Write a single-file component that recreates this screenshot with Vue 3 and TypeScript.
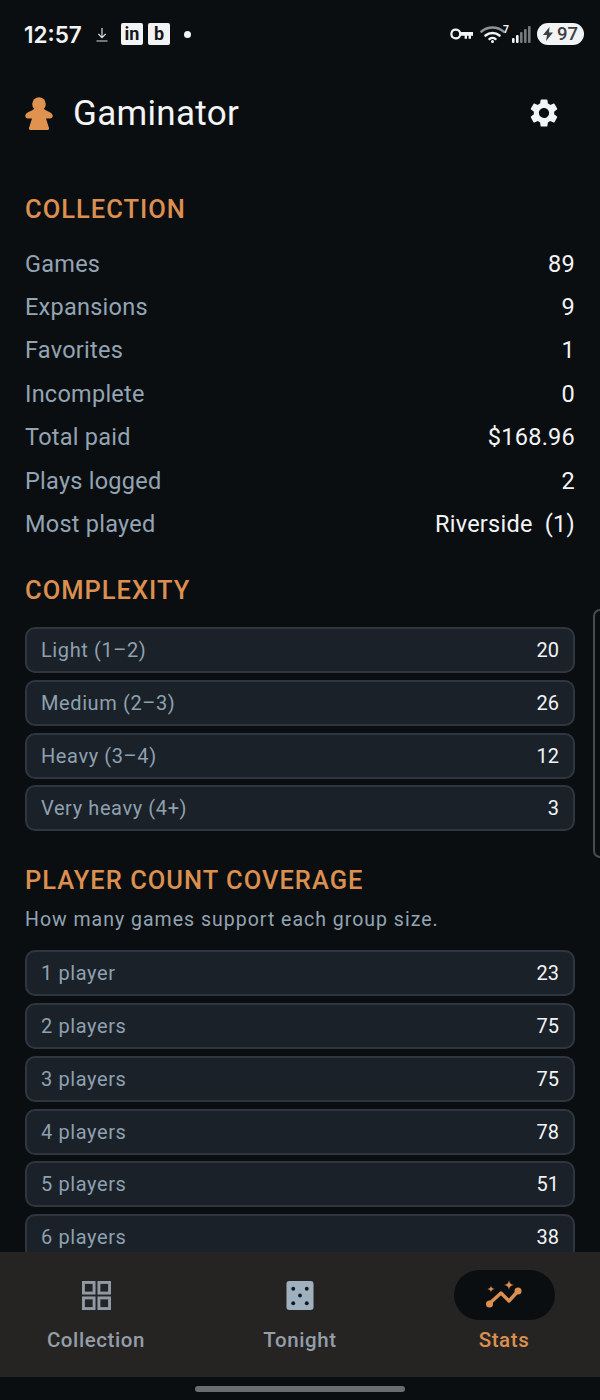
<template>
  <div class="screen">
    <div class="status">
      <div class="status-left">
        <span class="clock">12:57</span>
        <svg class="dl" viewBox="0 0 12 15" width="12" height="15" fill="none" stroke="#d9dbdd" stroke-width="1.2">
          <path d="M6 1v9.500M2.400 7l3.600 3.600L9.600 7M0.500 14h11" />
        </svg>
        <span class="app-badge">in</span>
        <span class="app-badge">b</span>
        <span class="dot"></span>
      </div>
      <div class="status-right">
        <svg viewBox="0 0 23 12" width="23" height="12" fill="#f2f3f4">
          <path fill-rule="evenodd" d="M5.800 0.500a5.500 5.500 0 0 1 5.200 3.500H23v3.800h-2v3h-2.400v-3H17v3h-2.400v-3H11a5.500 5.500 0 1 1-5.200-7.300zm0 2.200a3.300 3.300 0 1 0 0 6.600 3.300 3.300 0 0 0 0-6.600z" />
        </svg>
        <svg class="wifi" viewBox="0 -4 30 22" width="30" height="22" fill="none" stroke-linecap="round">
          <path d="M1.500 6.500a17 17 0 0 1 22 0" stroke="#8f9193" stroke-width="2.600" />
          <path d="M5.500 10.500a11 11 0 0 1 14 0" stroke="#f2f3f4" stroke-width="2.600" />
          <path d="M9.500 14a5 5 0 0 1 6 0" stroke="#f2f3f4" stroke-width="2.400" />
          <circle cx="12.500" cy="16.500" r="1.500" fill="#f2f3f4" />
          <text x="23" y="8" font-size="10.500" font-family="Roboto, sans-serif" font-weight="700" fill="#f2f3f4">7</text>
        </svg>
        <svg class="signal" viewBox="0 0 19 18" width="19" height="18">
          <rect x="0" y="13" width="2.600" height="5" rx="1" fill="#f2f3f4" />
          <rect x="4" y="10" width="2.600" height="8" rx="1" fill="#f2f3f4" />
          <rect x="8" y="7" width="2.600" height="11" rx="1" fill="#77797b" />
          <rect x="12" y="4" width="2.600" height="14" rx="1" fill="#77797b" />
          <rect x="16" y="1" width="2.600" height="17" rx="1" fill="#77797b" />
        </svg>
        <span class="battery">
          <svg viewBox="0 0 10 14" width="10" height="14"><path d="M6.500 0 0 8h4l-1 6 7-8.500H6z" fill="#3c3e40" /></svg>
          97
        </span>
      </div>
    </div>

    <main class="content">
      <header class="app-header">
        <div class="brand">
          <svg viewBox="0 0 28 33" width="28" height="33">
            <circle cx="14" cy="7" r="6.800" fill="#e0934f" />
            <path d="M9 12h10c1.500 1.500 7 3 8.300 5.500 1.200 2.300-.3 4-2.300 4h-4l3 9.500c.3 1.100-.4 2-1.500 2h-17c-1.100 0-1.800-.9-1.500-2l3-9.500H3c-2 0-3.500-1.700-2.300-4C2 15 7.500 13.500 9 12z" fill="#e0934f" />
          </svg>
          <h1>Gaminator</h1>
        </div>
        <svg class="gear" viewBox="0 0 24 24" width="34" height="34" fill="#f2f4f6">
          <path d="M19.140 12.940c.04-.3.060-.61.060-.94 0-.32-.02-.64-.07-.94l2.030-1.580a.49.49 0 0 0 .12-.61l-1.920-3.320a.488.488 0 0 0-.59-.22l-2.390.96c-.5-.38-1.030-.7-1.620-.94l-.36-2.540a.484.484 0 0 0-.48-.41h-3.840c-.24 0-.43.170-.47.410l-.36 2.540c-.59.240-1.130.57-1.620.94l-2.390-.96c-.22-.08-.47 0-.59.220L2.740 8.870c-.12.210-.08.470.120.610l2.030 1.580c-.05.300-.09.630-.09.940s.02.640.07.940l-2.030 1.580a.49.49 0 0 0-.12.610l1.920 3.320c.12.220.37.290.59.220l2.390-.96c.5.380 1.030.7 1.620.94l.36 2.540c.05.240.24.410.48.410h3.840c.24 0 .44-.17.470-.41l.36-2.540c.59-.24 1.130-.56 1.620-.94l2.390.96c.22.080.47 0 .59-.22l1.920-3.320c.12-.22.070-.47-.12-.61l-2.010-1.580zM12 15.600A3.610 3.610 0 0 1 8.400 12c0-1.980 1.620-3.600 3.600-3.600s3.600 1.620 3.600 3.600-1.620 3.600-3.600 3.600z" />
        </svg>
      </header>

      <section class="collection">
        <h2>COLLECTION</h2>
        <div class="stat-list">
          <div v-for="row in collection" :key="row.label" class="stat-row">
            <span class="stat-label">{{ row.label }}</span>
            <span class="stat-value">{{ row.value }}</span>
          </div>
        </div>
      </section>

      <section class="complexity">
        <h2>COMPLEXITY</h2>
        <div class="cards">
          <div v-for="row in complexity" :key="row.label" class="card">
            <span class="card-label">{{ row.label }}</span>
            <span class="card-value">{{ row.value }}</span>
          </div>
        </div>
      </section>

      <section class="coverage">
        <h2>PLAYER COUNT COVERAGE</h2>
        <p class="hint">How many games support each group size.</p>
        <div class="cards">
          <div v-for="row in coverage" :key="row.label" class="card">
            <span class="card-label">{{ row.label }}</span>
            <span class="card-value">{{ row.value }}</span>
          </div>
        </div>
      </section>
      <div class="edge-handle"></div>
    </main>

    <nav class="tabs">
      <div class="tab">
        <div class="tab-icon">
          <svg viewBox="0 0 30 30" width="29" height="29" fill="none" stroke="#8e9aa5" stroke-width="3">
            <rect x="1.500" y="1.500" width="11" height="11" />
            <rect x="17.500" y="1.500" width="11" height="11" />
            <rect x="1.500" y="17.500" width="11" height="11" />
            <rect x="17.500" y="17.500" width="11" height="11" />
          </svg>
        </div>
        <span>Collection</span>
      </div>
      <div class="tab">
        <div class="tab-icon">
          <svg viewBox="0 0 28 30" width="28" height="29">
            <rect width="28" height="30" rx="3" fill="#9fb0bf" />
            <circle cx="7" cy="8" r="2" fill="#14181c" />
            <circle cx="21" cy="8" r="2" fill="#14181c" />
            <circle cx="14" cy="15" r="2" fill="#14181c" />
            <circle cx="7" cy="23" r="2" fill="#14181c" />
            <circle cx="21" cy="23" r="2" fill="#14181c" />
          </svg>
        </div>
        <span>Tonight</span>
      </div>
      <div class="tab active">
        <div class="tab-icon">
          <svg viewBox="0 0 36 30" width="36" height="30" fill="none">
            <path d="M3 24 15 13l8 8 9-10" stroke="#dc9050" stroke-width="3.400" stroke-linecap="round" stroke-linejoin="round" />
            <circle cx="3.500" cy="24" r="3.500" fill="#dc9050" />
            <circle cx="32" cy="11" r="3.500" fill="#dc9050" />
            <path d="M23 0c.6 3.500 1.500 4.400 5 5-3.500.6-4.400 1.500-5 5-.6-3.500-1.500-4.400-5-5 3.500-.6 4.400-1.500 5-5z" fill="#dc9050" />
            <path d="M5 5.500c.4 2.400 1.100 3.100 3.500 3.500-2.400.4-3.100 1.100-3.500 3.500-.4-2.400-1.100-3.100-3.500-3.500 2.400-.4 3.100-1.100 3.500-3.500z" fill="#dc9050" />
          </svg>
        </div>
        <span>Stats</span>
      </div>
    </nav>
    <div class="gesture"><span class="pill"></span></div>
  </div>
</template>

<script setup lang="ts">
interface Row {
  label: string;
  value: string;
}

const collection: Row[] = [
  { label: 'Games', value: '89' },
  { label: 'Expansions', value: '9' },
  { label: 'Favorites', value: '1' },
  { label: 'Incomplete', value: '0' },
  { label: 'Total paid', value: '$168.96' },
  { label: 'Plays logged', value: '2' },
  { label: 'Most played', value: 'Riverside\u00a0 (1)' },
];

const complexity: Row[] = [
  { label: 'Light (1–2)', value: '20' },
  { label: 'Medium (2–3)', value: '26' },
  { label: 'Heavy (3–4)', value: '12' },
  { label: 'Very heavy (4+)', value: '3' },
];

const coverage: Row[] = [
  { label: '1 player', value: '23' },
  { label: '2 players', value: '75' },
  { label: '3 players', value: '75' },
  { label: '4 players', value: '78' },
  { label: '5 players', value: '51' },
  { label: '6 players', value: '38' },
];
</script>

<style>
html,
body {
  margin: 0;
  background: #0b0e11;
}
</style>

<style scoped>
.screen {
  width: 600px;
  height: 1400px;
  display: flex;
  flex-direction: column;
  overflow: hidden;
  background: #0b0e11;
  font-family: Roboto, "Liberation Sans", sans-serif;
  color: #f2f4f6;
}

.status {
  height: 68px;
  flex-shrink: 0;
  box-sizing: border-box;
  padding: 0 16px 0 24px;
  display: flex;
  align-items: center;
  justify-content: space-between;
}

.status-left,
.status-right {
  display: flex;
  align-items: center;
}

.clock {
  font-family: Inter, Roboto, sans-serif;
  font-size: 22.500px;
  font-weight: 600;
  width: 72px;
}

.dl {
  margin-right: 13px;
}

.app-badge {
  width: 22px;
  height: 22px;
  border-radius: 2px;
  background: #f2f3f4;
  color: #15171a;
  font-size: 18px;
  line-height: 22px;
  font-weight: 700;
  text-align: center;
  margin-right: 5px;
}

.dot {
  width: 7px;
  height: 7px;
  border-radius: 50%;
  background: #f2f3f4;
  margin-left: 9px;
}

.status-right {
  gap: 4px;
}

.wifi {
  margin-left: 3px;
  margin-top: -4px;
}

.signal {
  margin-left: -2px;
}

.battery {
  width: 47px;
  height: 22px;
  margin-left: 2px;
  border-radius: 11px;
  background: #f2f3f4;
  color: #3c3e40;
  font-size: 18.500px;
  font-weight: 500;
  display: flex;
  align-items: center;
  justify-content: center;
  gap: 4px;
}

.content {
  flex: 1;
  min-height: 0;
  overflow: hidden;
  position: relative;
  padding: 0 25px;
}

.app-header {
  height: 90px;
  display: flex;
  align-items: center;
  justify-content: space-between;
  padding-right: 14px;
}

.brand {
  display: flex;
  align-items: center;
  gap: 20px;
}

h1 {
  margin: 0;
  font-size: 35px;
  font-weight: 400;
  letter-spacing: 0.3px;
}

h2 {
  margin: 0;
  font-size: 25.500px;
  line-height: 32px;
  font-weight: 500;
  color: #dc9050;
  letter-spacing: 1px;
}

.collection {
  padding-top: 35px;
}

.stat-list {
  margin-top: 17px;
}

.stat-row {
  height: 43.400px;
  display: flex;
  align-items: center;
  justify-content: space-between;
  font-size: 23.500px;
  letter-spacing: 0.25px;
}

.stat-label {
  color: #93a4b3;
}

.complexity {
  padding-top: 28px;
}

.complexity .cards {
  margin-top: 21px;
}

.coverage {
  padding-top: 33px;
}

.hint {
  margin: 11px 0 16.500px;
  font-size: 19.500px;
  line-height: 26px;
  color: #93a4b3;
  letter-spacing: 1px;
}

.cards {
  display: flex;
  flex-direction: column;
  gap: 6.900px;
}

.card {
  height: 46px;
  box-sizing: border-box;
  padding: 0 14px;
  display: flex;
  align-items: center;
  justify-content: space-between;
  background: #1a2129;
  border: 2px solid #2e3740;
  border-radius: 10px;
}

.card-label {
  font-size: 20px;
  color: #8fa0af;
  letter-spacing: 0.6px;
}

.card-value {
  font-size: 20px;
  color: #f2f4f6;
}

.edge-handle {
  position: absolute;
  top: 541px;
  right: -7px;
  width: 14px;
  height: 249px;
  box-sizing: border-box;
  border: 2px solid #4a4d50;
  border-radius: 7px;
}

.tabs {
  height: 125px;
  flex-shrink: 0;
  margin: 0 -6px;
  display: grid;
  grid-template-columns: repeat(3, 1fr);
  background: #262422;
}

.tab {
  display: flex;
  flex-direction: column;
  align-items: center;
  padding-top: 18px;
  font-size: 20.500px;
  font-weight: 500;
  letter-spacing: 0.6px;
  color: #939ea8;
}

.tab-icon {
  width: 101px;
  height: 50px;
  display: flex;
  align-items: center;
  justify-content: center;
  border-radius: 25px;
  margin-bottom: 8px;
}

.tab.active {
  color: #dc9050;
}

.tab.active .tab-icon {
  background: #0b0e11;
}

.gesture {
  height: 23px;
  flex-shrink: 0;
  display: flex;
  justify-content: center;
  padding-top: 9px;
  box-sizing: border-box;
}

.pill {
  width: 210px;
  height: 6px;
  border-radius: 3px;
  background: #6a6c70;
}
</style>
